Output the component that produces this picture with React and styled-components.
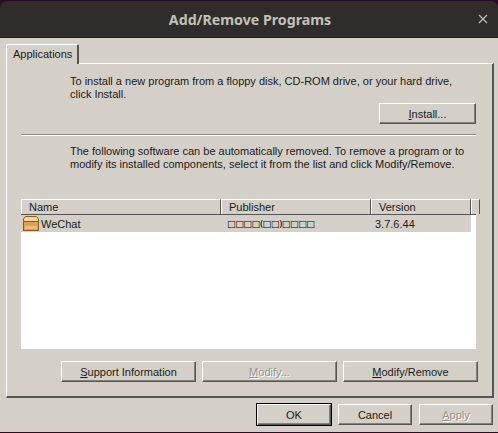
import * as React from "react"
import styled, { createGlobalStyle, css } from "styled-components"

const GlobalStyle = createGlobalStyle`
  html, body {
    margin: 0;
    padding: 0;
    background: #2c0a26;
  }
`

const Window = styled.div`
  width: 498px;
  height: 433px;
  box-sizing: border-box;
  padding: 1px 0;
  display: flex;
  flex-direction: column;
  overflow: hidden;
  font-family: "Liberation Sans", Arial, sans-serif;
  font-size: 11px;
  color: #1a1a1a;
`

const TitleBar = styled.div`
  height: 37px;
  flex: none;
  position: relative;
  display: flex;
  align-items: center;
  justify-content: center;
  padding-left: 2px;
  background: #2e2d2b;
  border-radius: 7px 7px 0 0;
  border-bottom: 1px solid #1e1d1c;
  box-sizing: border-box;
  color: #c4c1ba;
  font-family: "Noto Sans", Ubuntu, sans-serif;
  font-weight: 700;
  font-size: 14.2px;
`

const CloseIcon = styled.svg`
  position: absolute;
  right: 10px;
  top: 13px;
  width: 10px;
  height: 10px;
`

const Dialog = styled.div`
  flex: 1;
  background: #d4d0c8;
  display: flex;
  flex-direction: column;
  padding: 6px 4px 0 6px;
  min-height: 0;
`

const TabStrip = styled.div`
  height: 19px;
  display: flex;
  flex: none;
  position: relative;
  z-index: 1;
`

const Tab = styled.div`
  width: 73px;
  height: 20px;
  box-sizing: border-box;
  background: #d4d0c8;
  border: 1px solid #fff;
  border-right: 2px solid #555;
  border-bottom: none;
  border-radius: 2px 2px 0 0;
  padding: 3px 0 0 6px;
  font-size: 11px;
`

const Panel = styled.div`
  height: 335px;
  flex: none;
  box-sizing: border-box;
  border-top: 1px solid #fff;
  border-left: 1px solid #fff;
  border-right: 2px solid #555;
  border-bottom: 2px solid #555;
  padding: 11px 16px 0 14px;
  display: flex;
  flex-direction: column;
`

const Blurb = styled.p`
  margin: 0 0 0 49px;
  line-height: 13px;
  font-size: 11px;
  height: 26px;
`

const InstallRow = styled.div`
  display: flex;
  justify-content: flex-end;
  margin-top: 2px;
`

const Rule = styled.div`
  height: 2px;
  flex: none;
  margin: 10px 0 9px;
  background: linear-gradient(#8a8780 50%, #fff 50%);
`

const Key = styled.span`
  text-decoration: underline;
`

const Button = styled.button`
  width: ${p => p.$w}px;
  height: 21px;
  padding: 0;
  box-sizing: border-box;
  background: #d4d0c8;
  border: 1px solid;
  border-color: #fff #555 #555 #fff;
  box-shadow: inset -1px -1px 0 #85827b;
  font: 11px "Liberation Sans", Arial, sans-serif;
  color: #1a1a1a;
  ${p => p.disabled && css`
    color: #96938c;
    text-shadow: 1px 1px 0 #fff;
  `}
  ${p => p.$default && css`
    outline: 1px solid #000;
    outline-offset: 0;
  `}
`

const List = styled.div`
  height: 150px;
  flex: none;
  margin-top: 28px;
  background: #fff;
  display: flex;
  flex-direction: column;
`

const HeaderRow = styled.div`
  display: flex;
  flex: none;
  height: 15px;
  background: #d4d0c8;
  border-bottom: 1px solid #555;
`

const HeaderCell = styled.div`
  width: ${p => p.$w}px;
  box-sizing: border-box;
  flex: ${p => (p.$w ? "none" : 1)};
  border-top: 1px solid #fff;
  border-left: 1px solid #fff;
  border-right: 1px solid #555;
  padding: 1px 0 0 7px;
  line-height: 13px;
`

const Row = styled.div`
  display: flex;
  flex: none;
  width: 450px;
  height: 17px;
  align-items: center;
  background: #d4d0c8;
`

const NameCell = styled.div`
  width: 206px;
  display: flex;
  align-items: center;
  gap: 2px;
  padding-left: 2px;
  box-sizing: border-box;
`

const AppIcon = styled.svg`
  width: 16px;
  height: 16px;
  flex: none;
`

const PublisherCell = styled.div`
  width: 148px;
  font-family: "DejaVu Sans", sans-serif;
  font-size: 9.4px;
  letter-spacing: -0.7px;
  color: #000;
  white-space: nowrap;
`

const VersionCell = styled.div`
  flex: 1;
`

const ActionRow = styled.div`
  display: flex;
  gap: 6px;
  margin-top: 12px;
  margin-left: 40px;
  margin-right: -2px;
`

const Footer = styled.div`
  display: flex;
  justify-content: flex-end;
  gap: 7px;
  margin-top: 6px;
  margin-right: 1px;
`

export default function App() {
  return (
    <Window>
      <GlobalStyle />
      <TitleBar>
        Add/Remove Programs
        <CloseIcon viewBox="0 0 10 10">
          <path d="M1 1 L9 9 M9 1 L1 9" stroke="#b8b5ae" strokeWidth="1.4" fill="none" />
        </CloseIcon>
      </TitleBar>
      <Dialog>
        <TabStrip>
          <Tab>Applications</Tab>
        </TabStrip>
        <Panel>
          <Blurb>
            To install a new program from a floppy disk, CD-ROM drive, or your hard drive,
            <br />
            click Install.
          </Blurb>
          <InstallRow>
            <Button $w={97}>
              <Key>I</Key>nstall...
            </Button>
          </InstallRow>
          <Rule />
          <Blurb>
            The following software can be automatically removed. To remove a program or to
            <br />
            modify its installed components, select it from the list and click Modify/Remove.
          </Blurb>
          <List>
            <HeaderRow>
              <HeaderCell $w={200}>Name</HeaderCell>
              <HeaderCell $w={150}>Publisher</HeaderCell>
              <HeaderCell $w={100}>Version</HeaderCell>
              <HeaderCell />
            </HeaderRow>
            <Row>
              <NameCell>
                <AppIcon viewBox="0 0 16 16">
                  <rect x="0.5" y="5.5" width="15" height="9" fill="#dda050" stroke="#8a5a1c" />
                  <rect x="2" y="10" width="12" height="3" fill="#eebc78" />
                  <path d="M2.5 0.5 H13.5 L15.5 3 V5.5 H0.5 V3 Z" fill="#f2d5a4" stroke="#8a5a1c" />
                </AppIcon>
                WeChat
              </NameCell>
              <PublisherCell>□□□□(□□)□□□□</PublisherCell>
              <VersionCell>3.7.6.44</VersionCell>
            </Row>
          </List>
          <ActionRow>
            <Button $w={135}>
              <Key>S</Key>upport Information
            </Button>
            <Button $w={135} disabled>
              <Key>M</Key>odify...
            </Button>
            <Button $w={135}>
              <Key>M</Key>odify/Remove
            </Button>
          </ActionRow>
        </Panel>
        <Footer>
          <Button $w={74} $default>OK</Button>
          <Button $w={74}>Cancel</Button>
          <Button $w={74} disabled>
            <Key>A</Key>pply
          </Button>
        </Footer>
      </Dialog>
    </Window>
  )
}
